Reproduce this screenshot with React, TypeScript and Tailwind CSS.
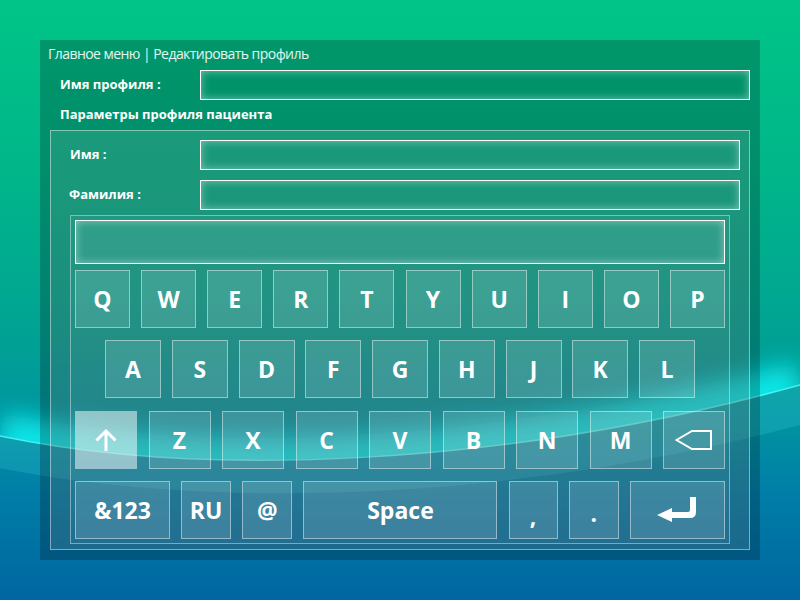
import React from "react";

const keyBase =
  "h-[58px] flex items-center justify-center border border-white/45 bg-white/[0.12] text-white font-bold text-[23px] leading-none";

function Background() {
  return (
    <svg
      width="800"
      height="600"
      viewBox="0 0 800 600"
      className="absolute inset-0"
    >
      <defs>
        <linearGradient id="bg" x1="0" y1="0" x2="0" y2="1">
          <stop offset="0" stopColor="#00c587" />
          <stop offset="0.3" stopColor="#00b58a" />
          <stop offset="0.55" stopColor="#00a393" />
          <stop offset="0.7" stopColor="#0094a0" />
          <stop offset="0.82" stopColor="#007ea8" />
          <stop offset="1" stopColor="#0066a0" />
        </linearGradient>
        <filter
          id="blur"
          filterUnits="userSpaceOnUse"
          x="-100"
          y="200"
          width="1000"
          height="400"
        >
          <feGaussianBlur stdDeviation="12" />
        </filter>
        <clipPath id="above">
          <path d="M0,0 H800 V385 C500,468 200,478 0,436 Z" />
        </clipPath>
      </defs>
      <rect x="0" y="0" width="800" height="600" fill="url(#bg)" />
      <g clipPath="url(#above)">
        <path
          d="M0,436 C200,478 500,468 800,385"
          stroke="#10f0f0"
          strokeWidth="46"
          fill="none"
          filter="url(#blur)"
          opacity="0.9"
        />
      </g>
      <path
        d="M0,436 C200,478 500,468 800,385 L800,425 C500,505 200,508 0,468 Z"
        fill="#40d0e0"
        opacity="0.22"
      />
      <path
        d="M0,436 C200,478 500,468 800,385"
        stroke="#50f4f4"
        strokeWidth="1.5"
        fill="none"
        opacity="0.9"
      />
    </svg>
  );
}

function Key({ cls, children }: { cls: string; children: React.ReactNode }) {
  return <div className={`${keyBase} ${cls}`}>{children}</div>;
}

const inputCls =
  "h-[30px] border border-white shadow-[inset_0_0_8px_rgba(255,255,255,0.45)]";

export default function App() {
  const row1 = ["Q", "W", "E", "R", "T", "Y", "U", "I", "O", "P"];
  const row2 = ["A", "S", "D", "F", "G", "H", "J", "K", "L"];
  const row3 = ["Z", "X", "C", "V", "B", "N", "M"];
  return (
    <div className="relative w-[800px] h-[600px] overflow-hidden font-['Open_Sans',sans-serif]">
      <Background />
      <div className="relative ml-[40px] mt-[40px] w-[720px] h-[520px] bg-black/[0.22] flex flex-col">
        <div className="pl-[8px] pt-[4px] h-[24px] leading-[20px] text-[14px] tracking-[-0.55px] text-white/90">
          Главное меню | Редактировать профиль
        </div>
        <div className="mt-[6px] flex items-center h-[30px]">
          <div className="w-[160px] pl-[20px] text-[13px] font-bold text-white">
            Имя профиля :
          </div>
          <div className={`${inputCls} w-[550px]`} />
        </div>
        <div className="h-[30px] flex items-center pl-[20px] text-[13px] font-bold text-white">
          Параметры профиля пациента
        </div>
        <div className="ml-[10px] w-[700px] h-[420px] border border-white/45 bg-white/10 flex flex-col pt-[9px]">
          <div className="flex items-center h-[30px]">
            <div className="w-[149px] pl-[19px] text-[13px] font-bold text-white">
              Имя :
            </div>
            <div className={`${inputCls} w-[540px]`} />
          </div>
          <div className="mt-[10px] flex items-center h-[30px]">
            <div className="w-[149px] pl-[18px] text-[13px] font-bold text-white">
              Фамилия :
            </div>
            <div className={`${inputCls} w-[540px]`} />
          </div>
          <div className="mt-[5px] ml-[19px] w-[660px] h-[329px] border border-white/40 bg-white/[0.04] flex flex-col px-[4px] pt-[4px]">
            <div className="h-[44px] border border-white bg-white/[0.06] shadow-[inset_0_0_8px_rgba(255,255,255,0.45)]" />
            <div className="mt-[6px] flex justify-between">
              {row1.map((k) => (
                <Key key={k} cls="w-[55px]">
                  {k}
                </Key>
              ))}
            </div>
            <div className="mt-[12px] flex justify-between px-[30px]">
              {row2.map((k) => (
                <Key key={k} cls="w-[56px]">
                  {k}
                </Key>
              ))}
            </div>
            <div className="mt-[13px] flex justify-between">
              <div className="w-[62px] h-[58px] bg-white/50 flex items-center justify-center">
                <svg width="22" height="23" viewBox="0 0 22 23">
                  <path
                    d="M11,2 V22 M1.5,11.5 L11,2 L20.5,11.5"
                    stroke="white"
                    strokeWidth="3"
                    fill="none"
                  />
                </svg>
              </div>
              {row3.map((k) => (
                <Key key={k} cls="w-[62px]">
                  {k}
                </Key>
              ))}
              <Key cls="w-[62px]">
                <svg width="38" height="21" viewBox="0 0 38 21">
                  <path
                    d="M1.5,10 L17,1 L36,1 L36,19 L17,19 Z"
                    stroke="white"
                    strokeWidth="2"
                    fill="none"
                  />
                </svg>
              </Key>
            </div>
            <div className="mt-[12px] flex justify-between">
              <Key cls="w-[95px]">&amp;123</Key>
              <Key cls="w-[50px]">RU</Key>
              <Key cls="w-[50px]">@</Key>
              <Key cls="w-[194px]">Space</Key>
              <Key cls="w-[49px]">
                <span className="mt-[12px]">,</span>
              </Key>
              <Key cls="w-[50px]">
                <span className="mt-[6px]">.</span>
              </Key>
              <Key cls="w-[95px]">
                <svg width="40" height="26" viewBox="0 0 40 26">
                  <path
                    d="M0,18 L15,11 L15,15 L31,15 Q33,15 33,13 L33,0 L39,0 L39,15 Q39,21 33,21 L15,21 L15,25 Z"
                    fill="white"
                  />
                </svg>
              </Key>
            </div>
          </div>
        </div>
      </div>
    </div>
  );
}
